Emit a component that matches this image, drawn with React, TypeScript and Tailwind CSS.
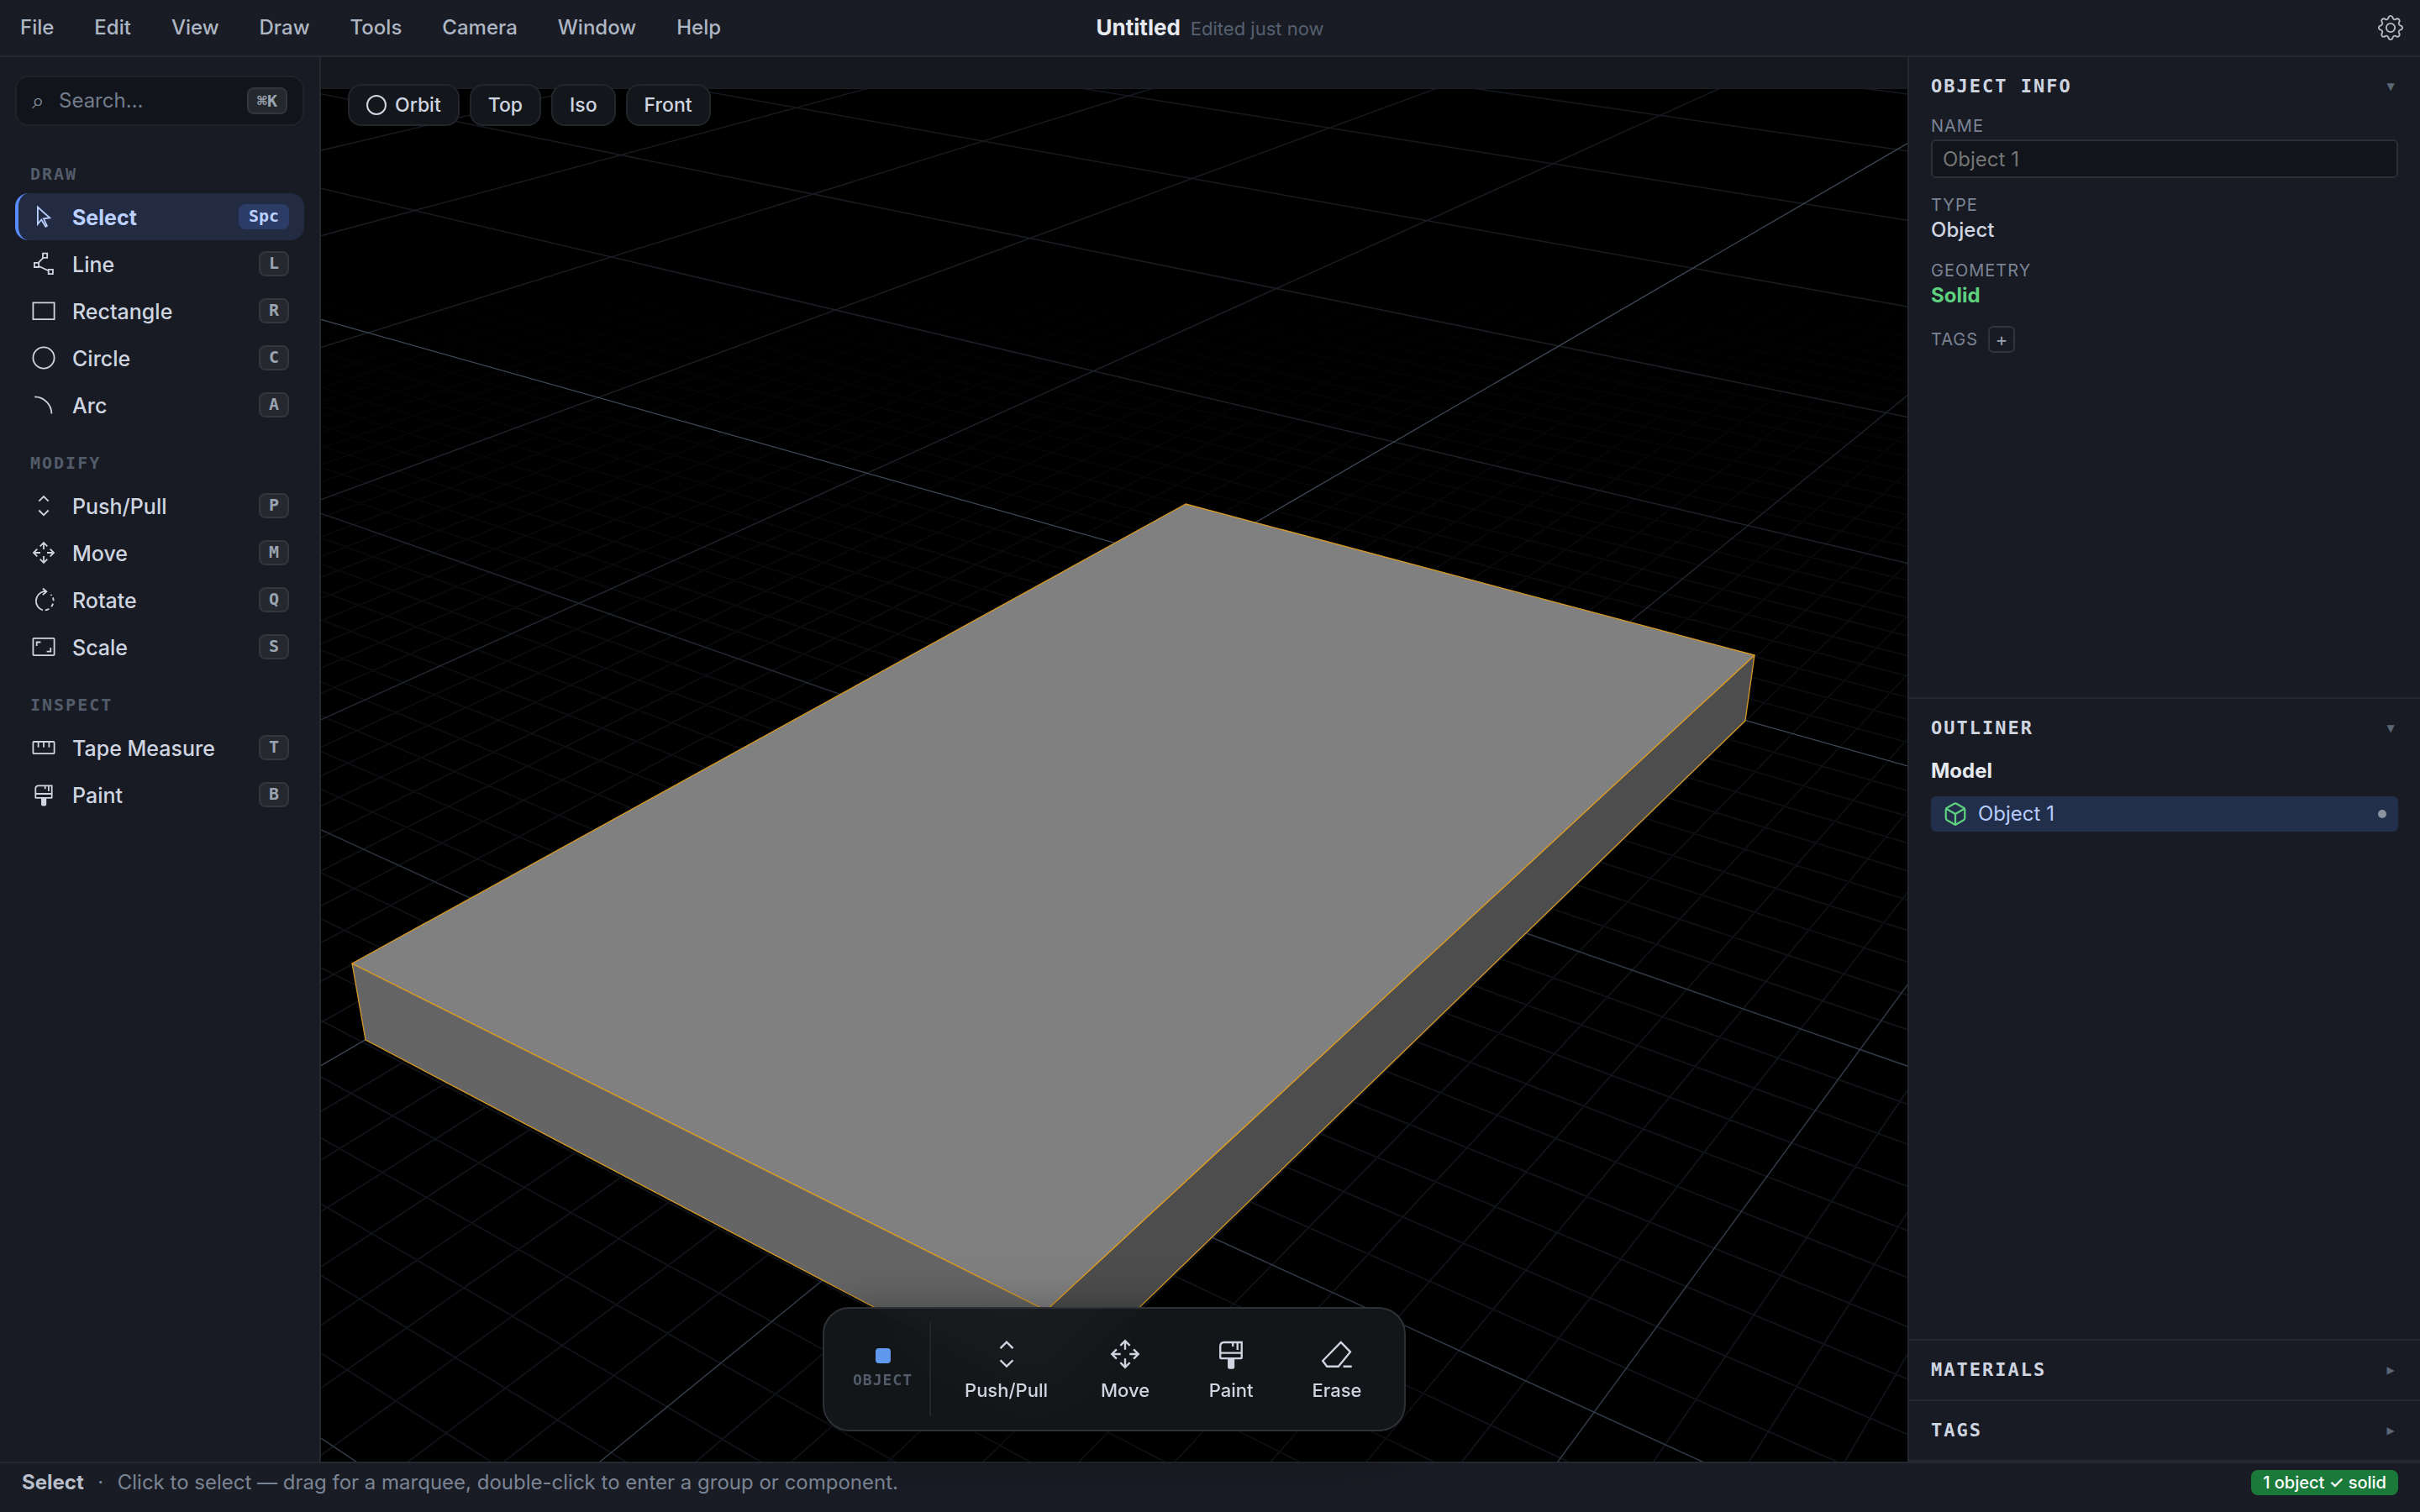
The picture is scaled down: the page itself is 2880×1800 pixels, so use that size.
import { useState } from "react";
import type { ReactNode } from "react";
import { Box } from "lucide-react";
import { BsGear } from "react-icons/bs";

const MENUS = ["File", "Edit", "View", "Draw", "Tools", "Camera", "Window", "Help"];

type Point = [number, number];

interface Tool {
  name: string;
  shortcut: string;
  icon: ReactNode;
}

const PUSH_PULL = <path d="M10.3 10.7 16 5l5.7 5.7M10.3 21.5 16 27.2l5.7-5.7" />;

const MOVE = (
  <path d="M16 4v8M11.7 8.3 16 4l4.3 4.3M16 28v-8M11.7 23.7 16 28l4.3-4.3M4 16h8M8.3 11.7 4 16l4.3 4.3M28 16h-8M23.7 11.7 28 16l-4.3 4.3" />
);

const PAINT = (
  <>
    <path d="M6.3 19.2V9c0-2.5 1.2-3.7 3.5-3.7h15.9v13.9c0 .5-.2.7-.7.7H7c-.5 0-.7-.2-.7-.7zM6.3 15h19.4M17.7 5.3v3.9M21.9 5.3v6.8" />
    <path d="M13.9 20h4.4v7.8c0 .5-.3.9-.9.9h-2.6c-.6 0-.9-.4-.9-.9z" fill="currentColor" />
  </>
);

const ERASE = <path d="M19.6 5.2 28.2 14 17.4 27.2H7l-3.8-5.1zM21.8 27.2H29.5" />;

const TOOL_GROUPS: { title: string; tools: Tool[] }[] = [
  {
    title: "DRAW",
    tools: [
      {
        name: "Select",
        shortcut: "Spc",
        icon: <path d="M8.9 4.6v20.2l4.3-5.3 5.1 8.3 1.6-1-4-8.5 7.3-.9z" />,
      },
      {
        name: "Line",
        shortcut: "L",
        icon: (
          <>
            <path d="m9.5 14.8 6-6M10.4 19l11.2 5.2" />
            <path d="M15 3.7h5.2v5.2H15zM4.9 14.8h5.2V20H4.9zM21.7 22.9h5.2v5.2h-5.2z" />
          </>
        ),
      },
      { name: "Rectangle", shortcut: "R", icon: <path d="M3.4 6.4h25.2v19.8H3.4z" /> },
      { name: "Circle", shortcut: "C", icon: <circle cx="16" cy="16" r="12.6" /> },
      { name: "Arc", shortcut: "A", icon: <path d="M5.2 6.4c11 0 20.2 9 20.2 20.2" /> },
    ],
  },
  {
    title: "MODIFY",
    tools: [
      { name: "Push/Pull", shortcut: "P", icon: PUSH_PULL },
      { name: "Move", shortcut: "M", icon: MOVE },
      {
        name: "Rotate",
        shortcut: "Q",
        icon: (
          <>
            <path d="M19.3 6.2H16a11.5 11.5 0 0 0-1.2 22.2M14.9 2.5l4.5 3.8-4.5 3.8" />
            <path d="M17.8 28.4a11.5 11.5 0 0 0 4.6-1.6M25.1 24.3a11.5 11.5 0 0 0 2-3.7M27.7 17.3a11.5 11.5 0 0 0-.8-3.9M25.5 11a11.5 11.5 0 0 0-1-1.2" />
          </>
        ),
      },
      {
        name: "Scale",
        shortcut: "S",
        icon: (
          <>
            <rect x="3.4" y="5.9" width="25.2" height="20.2" rx="1" />
            <path d="M7.7 15v-4.5h4.7M24.3 17v4.7h-4.7" />
          </>
        ),
      },
    ],
  },
  {
    title: "INSPECT",
    tools: [
      {
        name: "Tape Measure",
        shortcut: "T",
        icon: (
          <>
            <rect x="3.4" y="9" width="25.2" height="14.2" rx="1" />
            <path d="M9.6 9v6.8M16 9v6.8M22.4 9v6.8" />
          </>
        ),
      },
      { name: "Paint", shortcut: "B", icon: PAINT },
    ],
  },
];

const DOCK_ACTIONS = [
  { name: "Push/Pull", icon: PUSH_PULL },
  { name: "Move", icon: MOVE },
  { name: "Paint", icon: PAINT },
  { name: "Erase", icon: ERASE },
];

// Ground plane to screen, in major grid cells
function project(i: number, j: number): Point {
  const w = 1 + 0.131 * i + 0.0925 * j;
  return [
    (465 * i - 283.9 * j + 1411.3) / w,
    (-75.1 * i - 54.7 * j + 670.1) / w,
  ];
}

const NEAR = 0.25;

function rowLine(i: number): [Point, Point] {
  const start = Math.max(-8, (NEAR - 1 - 0.131 * i) / 0.0925);
  return [project(i, start), project(i, 16)];
}

function columnLine(j: number): [Point, Point] {
  const start = Math.max(-6, (NEAR - 1 - 0.0925 * j) / 0.131);
  return [project(start, j), project(16, j)];
}

function toPath(lines: [Point, Point][]) {
  return lines
    .map(([a, b]) => `M${a[0].toFixed(1)} ${a[1].toFixed(1)}L${b[0].toFixed(1)} ${b[1].toFixed(1)}`)
    .join("");
}

const minorSteps = Array.from({ length: 121 }, (_, n) => n - 50).filter((n) => n % 10 !== 0);
const majorSteps = Array.from({ length: 16 }, (_, n) => n - 5).filter((n) => n !== 0);

const MINOR_GRID = toPath(minorSteps.flatMap((n) => [rowLine(n / 10), columnLine(n / 10)]));
const MAJOR_GRID = toPath(majorSteps.flatMap((n) => [rowLine(n), columnLine(n)]));
const AXES = toPath([rowLine(0), columnLine(0)]);

function Icon({ className, children }: { className: string; children: ReactNode }) {
  return (
    <svg
      viewBox="0 0 32 32"
      fill="none"
      stroke="currentColor"
      strokeWidth="1.8"
      className={className}
      aria-hidden="true"
    >
      {children}
    </svg>
  );
}

function Scene() {
  return (
    <svg
      viewBox="382 68 1888 1672"
      preserveAspectRatio="xMidYMid slice"
      className="absolute inset-0 h-full w-full"
      aria-hidden="true"
    >
      <defs>
        <linearGradient id="minorFade" gradientUnits="userSpaceOnUse" x1="0" y1="320" x2="0" y2="1250">
          <stop offset="0" stopColor="#0f1116" stopOpacity="0" />
          <stop offset="0.5" stopColor="#0f1116" stopOpacity="0.7" />
          <stop offset="1" stopColor="#101319" />
        </linearGradient>
        <linearGradient id="majorFade" gradientUnits="userSpaceOnUse" x1="0" y1="100" x2="0" y2="1250">
          <stop offset="0" stopColor="#15181e" />
          <stop offset="0.5" stopColor="#1e232b" />
          <stop offset="1" stopColor="#323a48" />
        </linearGradient>
      </defs>
      <g fill="none">
        <path d={MINOR_GRID} stroke="url(#minorFade)" strokeWidth="1.8" />
        <path d={MAJOR_GRID} stroke="url(#majorFade)" strokeWidth="1.5" />
        <path d={AXES} stroke="#414b5b" strokeWidth="1.2" />
      </g>
      <g stroke="#d99a24" strokeWidth="1.3" strokeLinejoin="round">
        <path d="M419 1147 435 1238 1245 1664 1245 1560z" fill="#656565" />
        <path d="M2088 780 2077 858 1245 1664 1245 1560z" fill="#4d4d4d" />
        <path d="M1411 600 2088 780 1245 1560 419 1147z" fill="#808080" />
      </g>
    </svg>
  );
}

function MenuBar() {
  return (
    <header className="relative flex h-[68px] shrink-0 items-center justify-between border-b-2 border-[#25282e] bg-[#191c24] pr-5">
      <nav className="flex">
        {MENUS.map((menu) => (
          <button key={menu} className="px-6 text-[24px] leading-8 font-medium text-[#aeb6c3]">
            {menu}
          </button>
        ))}
      </nav>
      <div className="absolute left-1/2 flex -translate-x-1/2 items-baseline gap-3 whitespace-nowrap">
        <h1 className="text-[26px] leading-8 font-bold text-[#e6e9ee]">Untitled</h1>
        <span className="text-[22px] leading-8 text-[#566070]">Edited just now</span>
      </div>
      <button aria-label="Settings" className="text-[#b4bbc7]">
        <BsGear size={30} />
      </button>
    </header>
  );
}

function ToolRail({ active, onSelect }: { active: string; onSelect: (name: string) => void }) {
  return (
    <aside className="w-[382px] shrink-0 border-r-2 border-[#25282e] bg-[#181b23] px-[18px] pt-[22px]">
      <label className="mb-4 flex h-[60px] items-center rounded-2xl border-2 border-[#1f2226] bg-[#11141b] px-[18px]">
        <span className="w-8 font-['DejaVu_Sans',sans-serif] text-[26px] leading-8 text-[#8b93a1]">⌕</span>
        <input
          type="text"
          aria-label="Search"
          placeholder="Search…"
          className="min-w-0 flex-1 bg-transparent text-[24px] leading-8 text-[#cfd5e0] outline-none placeholder:text-[#737c8b]"
        />
        <kbd className="flex h-8 items-center rounded-lg border-2 border-[#33363b] bg-[#25282d] px-[10px] font-['DejaVu_Sans_Mono',monospace] text-[20px] font-bold text-[#9aa3b0]">
          ⌘K
        </kbd>
      </label>

      {TOOL_GROUPS.map((group) => (
        <section key={group.title}>
          <h2 className="px-[18px] pt-7 pb-[10px] font-['DejaVu_Sans_Mono',monospace] text-[20px] leading-[26px] font-bold tracking-[2px] text-[#535c6a]">
            {group.title}
          </h2>
          {group.tools.map((tool) => {
            const selected = tool.name === active;
            return (
              <button
                key={tool.name}
                onClick={() => onSelect(tool.name)}
                className={`flex h-14 w-full items-center gap-[18px] rounded-2xl border-l-4 pr-[18px] pl-[14px] text-left text-[25px] leading-8 ${
                  selected
                    ? "border-[#5b8cff] bg-[#222b42] font-bold text-[#bcd0ff]"
                    : "border-transparent font-medium text-[#cfd5e0]"
                }`}
              >
                <Icon className="h-8 w-8 shrink-0">{tool.icon}</Icon>
                <span className="flex-1 pt-[2px]">{tool.name}</span>
                <kbd
                  className={`flex h-[30px] items-center rounded-lg border-2 px-[10px] pb-[2px] font-['DejaVu_Sans_Mono',monospace] text-[20px] font-bold ${
                    selected ? "border-[#2b3c66] bg-[#2b3c66] text-[#bcd0ff]" : "border-[#33363b] bg-[#25282e] text-[#9aa3b0]"
                  }`}
                >
                  {tool.shortcut}
                </kbd>
              </button>
            );
          })}
        </section>
      ))}
    </aside>
  );
}

function Viewport() {
  return (
    <main className="relative min-w-0 flex-1 bg-black">
      <Scene />
      <div className="relative h-[38px] border-b border-[#1b1e22] bg-[#15181c]" />
      <div className="absolute top-8 left-8 flex gap-3">
        {["Orbit", "Top", "Iso", "Front"].map((view) => (
          <button
            key={view}
            className="flex h-[50px] items-center gap-[10px] rounded-2xl border-2 border-[#22262b] bg-[#13171b] px-5 text-[23px] leading-8 font-medium text-[#cfd5e0]"
          >
            {view === "Orbit" && <span className="h-6 w-6 rounded-full border-2 border-[#cfd5e0]" />}
            {view}
          </button>
        ))}
      </div>
      <Dock />
    </main>
  );
}

function Dock() {
  return (
    <div className="absolute bottom-9 left-1/2 z-10 flex h-[148px] -translate-x-1/2 rounded-[32px] border-2 border-[#2d3136] bg-[#13171b]/94 px-5 py-4 shadow-[0_16px_64px_rgba(0,0,0,0.5)] backdrop-blur-2xl">
      <div className="mr-[14px] flex flex-col items-center justify-center gap-2 border-r-2 border-[#22262b] pr-5 pl-[14px]">
        <span className="h-[18px] w-[18px] rounded-sm bg-[#6098ee]" />
        <span className="font-['DejaVu_Sans_Mono',monospace] text-[18px] leading-6 font-bold tracking-[1px] text-[#535c6a]">
          OBJECT
        </span>
      </div>
      <div className="flex gap-[6px]">
        {DOCK_ACTIONS.map((action) => (
          <button
            key={action.name}
            className="flex min-w-[120px] flex-col items-center justify-center gap-2 px-[26px] text-[22px] leading-7 font-medium text-[#cfd5e0]"
          >
            <Icon className="h-[42px] w-[42px]">{action.icon}</Icon>
            {action.name}
          </button>
        ))}
      </div>
    </div>
  );
}

function Panel({ title, open = false, children }: { title: string; open?: boolean; children?: ReactNode }) {
  return (
    <section className={`border-b-2 border-[#25282e] px-[26px] ${open ? "flex-1" : ""}`}>
      <button aria-expanded={open} className="flex h-[70px] w-full items-center justify-between">
        <span className="font-['DejaVu_Sans_Mono',monospace] text-[22px] font-bold tracking-[2px] text-[#cfd5e0]">
          {title}
        </span>
        <span className="w-[18px] text-center font-['DejaVu_Sans',sans-serif] text-[12px] text-[#5c6675]">
          {open ? "▼" : "▶"}
        </span>
      </button>
      {children}
    </section>
  );
}

const fieldLabel = "block text-[20px] leading-6 tracking-[1px] text-[#7b8494]";

function Inspector() {
  return (
    <aside className="flex w-[610px] shrink-0 flex-col border-l-2 border-[#25282e] bg-[#181b23] text-[24px] leading-8">
      <Panel title="OBJECT INFO" open>
        <div className="flex flex-col gap-5">
          <div>
            <label htmlFor="object-name" className={fieldLabel}>
              NAME
            </label>
            <input
              id="object-name"
              type="text"
              placeholder="Object 1"
              className="mt-1 block h-[46px] w-full rounded-md border-2 border-[#2c2f34] bg-[#11141b] px-3 text-[#cfd5e0] outline-none placeholder:text-[#757575]"
            />
          </div>
          <div>
            <div className={fieldLabel}>TYPE</div>
            <div className="mt-[2px] font-medium text-[#cfd5e0]">Object</div>
          </div>
          <div>
            <div className={fieldLabel}>GEOMETRY</div>
            <div className="mt-[2px] font-bold text-[#5fd07f]">Solid</div>
          </div>
          <div className="flex items-center gap-3">
            <div className={fieldLabel}>TAGS</div>
            <button
              aria-label="Add tag"
              className="flex h-8 w-8 items-center justify-center rounded-md border-2 border-[#2f333a] text-[22px] leading-7 text-[#9aa3b0]"
            >
              +
            </button>
          </div>
        </div>
      </Panel>

      <Panel title="OUTLINER" open>
        <div className="font-bold text-[#e6e9ee]">Model</div>
        <button className="mt-[14px] flex h-[42px] w-full items-center gap-3 rounded-md bg-[#222f4a] px-[14px] text-[#b8ccfb]">
          <Box size={30} strokeWidth={1.8} className="text-[#5fd07f]" />
          <span className="flex-1 text-left">Object 1</span>
          <span className="h-[10px] w-[10px] rounded-full bg-[#8b93a1]" />
        </button>
      </Panel>

      <Panel title="MATERIALS" />
      <Panel title="TAGS" />
    </aside>
  );
}

function StatusBar({ tool }: { tool: string }) {
  return (
    <footer className="flex h-[60px] shrink-0 items-center border-t-2 border-[#25282e] bg-[#191c24] px-[26px] pb-3 text-[24px] leading-8 text-[#7b8494]">
      <span className="font-bold text-[#b8bfca]">{tool}</span>
      <span className="w-10 text-center">·</span>
      <span className="flex-1">
        Click to select — drag for a marquee, double-click to enter a group or component.
      </span>
      <span className="rounded-lg bg-[#1b7a3a] px-[14px] text-[20px] leading-[30px] font-medium text-white">
        1 object ✓ solid
      </span>
    </footer>
  );
}

export default function App() {
  const [tool, setTool] = useState("Select");

  return (
    <div className="flex h-screen flex-col bg-[#191c24] font-[Inter,'DejaVu_Sans',sans-serif]">
      <MenuBar />
      <div className="flex min-h-0 flex-1">
        <ToolRail active={tool} onSelect={setTool} />
        <Viewport />
        <Inspector />
      </div>
      <StatusBar tool={tool} />
    </div>
  );
}
